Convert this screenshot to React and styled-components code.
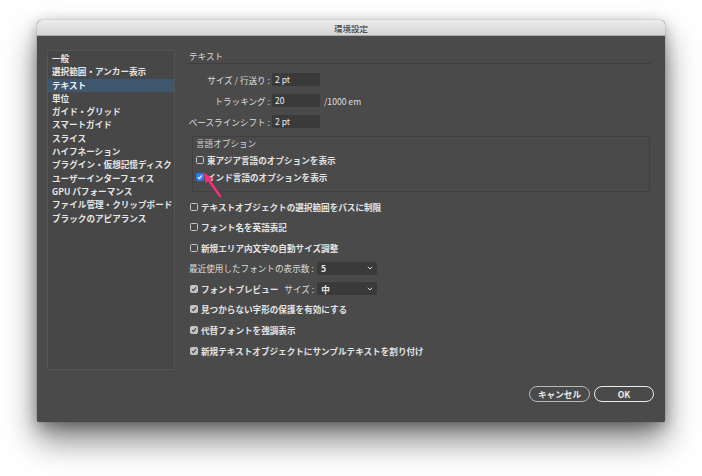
import React from 'react'
import styled, { createGlobalStyle } from 'styled-components'

const Global = createGlobalStyle`
  html, body {
    margin: 0;
    background: #fff;
  }
  body {
    font-family: "Noto Sans CJK JP", "Noto Sans", "Liberation Sans", sans-serif;
    -webkit-font-smoothing: antialiased;
  }
`

const Page = styled.div`
  padding: 20px 0 60px 37px;
`

const Window = styled.div`
  width: 628px;
  height: 402px;
  border-radius: 5px 5px 2px 2px;
  overflow: hidden;
  background: #4a4a4a;
  box-shadow: 0 18px 32px rgba(0, 0, 0, 0.5), 0 4px 14px rgba(0, 0, 0, 0.3),
    0 0 1px rgba(0, 0, 0, 0.5);
  display: flex;
  flex-direction: column;
`

const TitleBar = styled.div`
  height: 15px;
  flex: none;
  background: linear-gradient(to bottom, #ececec 0%, #d5d5d5 100%);
  border-bottom: 1px solid #a9a9a9;
  display: flex;
  align-items: center;
  justify-content: center;
  font-size: 8.5px;
  color: #2a2a2a;
`

const Body = styled.div`
  flex: 1;
  padding: 14px 11px 0 10px;
  display: flex;
  flex-direction: column;
`

const Content = styled.div`
  display: flex;
  height: 320px;
  gap: 12px;
`

const Sidebar = styled.ul`
  width: 128px;
  box-sizing: border-box;
  margin: 0;
  padding: 1px 0 0;
  list-style: none;
  border: 1px solid #555;
  background: #474747;
`

const NavItem = styled.li`
  height: 13.3px;
  line-height: 13.3px;
  padding-left: 4px;
  font-size: 8.6px;
  font-weight: 700;
  color: ${p => (p.$active ? '#f4f4f4' : '#e6e6e6')};
  background: ${p => (p.$active ? '#3f566f' : 'transparent')};
  white-space: nowrap;
`

const Main = styled.div`
  flex: 1;
  display: flex;
  flex-direction: column;
`

const SectionTitle = styled.div`
  height: 13px;
  line-height: 13px;
  padding-left: 2px;
  font-size: 8.6px;
  color: #dcdcdc;
  border-bottom: 1px solid #3f3f3f;
  margin-right: 3px;
`

const Form = styled.div`
  margin-top: 9px;
  display: flex;
  flex-direction: column;
  gap: 8px;
`

const FieldRow = styled.div`
  display: flex;
  align-items: center;
  height: 13px;
`

const FieldLabel = styled.span`
  width: ${p => p.$width || 83}px;
  flex: none;
  text-align: ${p => p.$align || 'right'};
  font-size: 8.6px;
  font-weight: 400;
  color: #dedede;
  white-space: nowrap;
`

const TextInput = styled.div`
  width: 48px;
  height: 13px;
  margin-left: 2px;
  box-sizing: border-box;
  padding-left: 3px;
  background: #3a3a3a;
  border-radius: 1px;
  font-size: 8.6px;
  line-height: 13px;
  color: #ececec;
`

const Unit = styled.span`
  margin-left: 4px;
  font-size: 8.6px;
  color: #dedede;
`

const Group = styled.div`
  position: relative;
  margin: 8px 4px 0 5px;
  padding: 0 0 8px 3px;
  border: 1px solid #404040;
  display: flex;
  flex-direction: column;
  gap: 3.5px;
`

const GroupTitle = styled.div`
  height: 13px;
  line-height: 13px;
  font-size: 8.6px;
  color: #d4d4d4;
`

const List = styled.div`
  margin-top: 8px;
  display: flex;
  flex-direction: column;
  gap: 7.6px;
  padding-left: 3px;
`

const Row = styled.label`
  display: flex;
  align-items: center;
  height: 13px;
  font-size: 8.6px;
  font-weight: 700;
  color: #e4e4e4;
  white-space: nowrap;
`

const Box = styled.span`
  width: 8px;
  height: 8px;
  box-sizing: border-box;
  border-radius: 1.5px;
  margin-right: 3px;
  flex: none;
  display: inline-flex;
  align-items: center;
  justify-content: center;
  border: 1px solid ${p => (p.$variant === 'blue' ? '#2f7bf5' : '#c4c4c4')};
  background: ${p =>
    p.$variant === 'blue' ? '#2f7bf5' : p.$variant === 'on' ? '#c4c4c4' : 'transparent'};
`

const Plain = styled.span`
  margin-left: 6px;
  font-size: 8.6px;
  font-weight: 400;
  color: #dedede;
  white-space: nowrap;
`

const Select = styled.div`
  width: 60px;
  height: 13px;
  margin-left: 3px;
  box-sizing: border-box;
  padding: 0 4px;
  background: #3a3a3a;
  border-radius: 2px;
  display: flex;
  align-items: center;
  justify-content: space-between;
  font-size: 8.6px;
  font-weight: 700;
  color: #ececec;
`

const Footer = styled.div`
  margin-top: 16px;
  display: flex;
  justify-content: flex-end;
  gap: 4px;
`

const Button = styled.button`
  width: ${p => p.$width}px;
  height: 16px;
  padding: 0;
  border-radius: 8px;
  background: #4a4a4a;
  border: ${p => (p.$primary ? '1.5px solid #ededed' : '1px solid #b9b9b9')};
  color: #ececec;
  font-family: inherit;
  font-size: 8.6px;
  font-weight: 700;
  display: flex;
  align-items: center;
  justify-content: center;
`

const Arrow = styled.svg`
  position: absolute;
  left: 6px;
  top: 33px;
`

const Check = ({ color }) => (
  <svg width="6" height="6" viewBox="0 0 6 6">
    <path d="M1 3.2 L2.4 4.6 L5 1.4" fill="none" stroke={color} strokeWidth="1.2" />
  </svg>
)

const Checkbox = ({ variant }) => (
  <Box $variant={variant}>
    {variant === 'blue' && <Check color="#fff" />}
    {variant === 'on' && <Check color="#474747" />}
  </Box>
)

const Chevron = () => (
  <svg width="6" height="4" viewBox="0 0 6 4">
    <path d="M0.8 0.8 L3 3 L5.2 0.8" fill="none" stroke="#d8d8d8" strokeWidth="1" />
  </svg>
)

const nav = [
  '一般',
  '選択範囲・アンカー表示',
  'テキスト',
  '単位',
  'ガイド・グリッド',
  'スマートガイド',
  'スライス',
  'ハイフネーション',
  'プラグイン・仮想記憶ディスク',
  'ユーザーインターフェイス',
  'GPU パフォーマンス',
  'ファイル管理・クリップボード',
  'ブラックのアピアランス',
]

const App = () => (
  <Page>
    <Global />
    <Window>
      <TitleBar>環境設定</TitleBar>
      <Body>
        <Content>
          <Sidebar>
            {nav.map(item => (
              <NavItem key={item} $active={item === 'テキスト'}>
                {item}
              </NavItem>
            ))}
          </Sidebar>
          <Main>
            <SectionTitle>テキスト</SectionTitle>
            <Form>
              <FieldRow>
                <FieldLabel>サイズ / 行送り :</FieldLabel>
                <TextInput>2 pt</TextInput>
              </FieldRow>
              <FieldRow>
                <FieldLabel>トラッキング :</FieldLabel>
                <TextInput>20</TextInput>
                <Unit>/1000 em</Unit>
              </FieldRow>
              <FieldRow>
                <FieldLabel>ベースラインシフト :</FieldLabel>
                <TextInput>2 pt</TextInput>
              </FieldRow>
            </Form>
            <Group>
              <GroupTitle>言語オプション</GroupTitle>
              <Row>
                <Checkbox variant="off" />
                東アジア言語のオプションを表示
              </Row>
              <Row>
                <Checkbox variant="blue" />
                インド言語のオプションを表示
              </Row>
              <Arrow width="24" height="28" viewBox="0 0 24 28">
                <line x1="9" y1="9" x2="21" y2="26" stroke="#ff2b7c" strokeWidth="2.4" strokeLinecap="round" />
                <polygon points="5,3 13.6,8.2 6.6,13" fill="#ff2b7c" />
              </Arrow>
            </Group>
            <List>
              <Row>
                <Checkbox variant="off" />
                テキストオブジェクトの選択範囲をパスに制限
              </Row>
              <Row>
                <Checkbox variant="off" />
                フォント名を英語表記
              </Row>
              <Row>
                <Checkbox variant="off" />
                新規エリア内文字の自動サイズ調整
              </Row>
              <Row>
                <FieldLabel $width={125} $align="left" style={{ marginLeft: -1 }}>
                  最近使用したフォントの表示数 :
                </FieldLabel>
                <Select>
                  5<Chevron />
                </Select>
              </Row>
              <Row>
                <Checkbox variant="on" />
                フォントプレビュー
                <Plain>サイズ :</Plain>
                <Select>
                  中<Chevron />
                </Select>
              </Row>
              <Row>
                <Checkbox variant="on" />
                見つからない字形の保護を有効にする
              </Row>
              <Row>
                <Checkbox variant="on" />
                代替フォントを強調表示
              </Row>
              <Row>
                <Checkbox variant="on" />
                新規テキストオブジェクトにサンプルテキストを割り付け
              </Row>
            </List>
          </Main>
        </Content>
        <Footer>
          <Button $width={61}>キャンセル</Button>
          <Button $width={60} $primary>
            OK
          </Button>
        </Footer>
      </Body>
    </Window>
  </Page>
)

export default App
